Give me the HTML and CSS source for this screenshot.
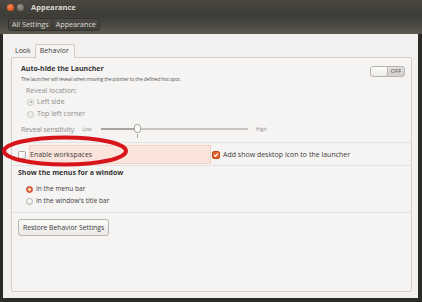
FILE: index.html
```html
<html><head>
<meta charset="UTF-8">
<meta name="viewport" content="width=device-width, initial-scale=1.0">
<title>Appearance</title>
<link rel="stylesheet" href="styles.css">
</head>
<body>
  <div class="window">
    <header class="titlebar">
      <div class="title-row">
        <span class="win-btn close"></span>
        <span class="win-btn minimize"></span>
        <span class="title">Appearance</span>
      </div>
      <div class="toolbar">
        <div class="crumbs">
          <span class="crumb">All Settings</span>
          <span class="crumb">Appearance</span>
        </div>
      </div>
    </header>

    <div class="content">
      <div class="tabs">
        <span class="tab">Look</span>
        <span class="tab active">Behavior</span>
      </div>

      <div class="panel">
        <section class="group launcher">
          <div class="group-head">
            <div>
              <div class="heading">Auto-hide the Launcher</div>
              <div class="desc">The launcher will reveal when moving the pointer to the defined hot spot.</div>
            </div>
            <div class="switch">
              <span class="switch-knob"></span>
              <span class="switch-label">OFF</span>
            </div>
          </div>
          <div class="sub-label">Reveal location:</div>
          <div class="radio disabled checked"><span class="radio-mark"></span>Left side</div>
          <div class="radio disabled"><span class="radio-mark"></span>Top left corner</div>
          <div class="sensitivity">
            <span class="sens-label">Reveal sensitivity</span>
            <span class="sens-end">Low</span>
            <div class="slider">
              <div class="slider-fill"></div>
              <span class="slider-thumb"></span>
            </div>
            <span class="sens-end high">High</span>
          </div>
        </section>

        <section class="group options">
          <div class="check">
            <span class="check-mark"></span>
            <span class="check-text highlight">Enable workspaces</span>
          </div>
          <div class="check checked">
            <span class="check-mark">
              <svg width="8" height="8" viewBox="0 0 8 8"><path d="M1.6 4.2 L3.3 5.8 L6.4 2.2" fill="none" stroke="#fff" stroke-width="1.4" stroke-linecap="round" stroke-linejoin="round"/></svg>
            </span>
            <span class="check-text">Add show desktop icon to the launcher</span>
          </div>
        </section>

        <section class="group menus">
          <div class="heading">Show the menus for a window</div>
          <div class="radio checked accent"><span class="radio-mark"></span>In the menu bar</div>
          <div class="radio"><span class="radio-mark"></span>In the window's title bar</div>
        </section>

        <section class="group restore">
          <button class="button">Restore Behavior Settings</button>
        </section>
      </div>
    </div>

    <svg class="annotation" width="130" height="34" viewBox="0 0 130 34">
      <ellipse cx="64" cy="16" rx="61" ry="13.5" fill="none" stroke="#d8141b" stroke-width="4"/>
    </svg>
  </div>
</body></html>
```

FILE: styles.css
```css
:root {
  --ubuntu-orange: #dd4814;
  --text-color: #3c3c3c;
  --muted-color: #8e8e8c;
  --window-bg: #f2f1f0;
  --line-color: #e4e2e0;
}

body {
  margin: 0;
  padding: 0;
  background: #2c2a26;
  font-family: 'Open Sans', 'DejaVu Sans', sans-serif;
  color: var(--text-color);
  overflow: hidden;
}

.window {
  position: relative;
  width: 422px;
  height: 302px;
  display: flex;
  flex-direction: column;
}

/* title bar + toolbar */
.titlebar {
  height: 34px;
  background: linear-gradient(to bottom, #4a4841 0%, #3e3c37 45%, #4a4842 75%, #5c5950 100%);
  display: flex;
  flex-direction: column;
}

.title-row {
  height: 14px;
  display: flex;
  align-items: center;
  padding-left: 7px;
  gap: 2px;
}

.win-btn {
  width: 7px;
  height: 7px;
  border-radius: 50%;
  display: inline-block;
}

.win-btn.close {
  background: radial-gradient(circle at 40% 35%, #f58a5a, #e2541c 70%);
}

.win-btn.minimize {
  background: radial-gradient(circle at 40% 35%, #9b9890, #6d6a63 70%);
  margin-left: 1px;
}

.title {
  color: #dfdbd2;
  font-size: 7.5px;
  font-weight: 700;
  margin-left: 5px;
}

.toolbar {
  height: 20px;
  padding: 4px 0 0 8px;
  box-sizing: border-box;
}

.crumbs {
  display: inline-flex;
  height: 13px;
  border: 1px solid #35332f;
  border-radius: 3px;
  background: linear-gradient(to bottom, #4c4a44, #403e39);
  box-sizing: border-box;
}

.crumb {
  color: #dfdbd2;
  font-size: 7.2px;
  line-height: 11px;
  padding: 0 3px 0 3px;
}

.crumb + .crumb {
  border-left: 1px solid #3a3834;
}

/* main area */
.content {
  flex: 1;
  background: var(--window-bg);
  margin: 0 4px 4px 3px;
  padding: 9px 6px 6px 8px;
  display: flex;
  flex-direction: column;
}

.tabs {
  display: flex;
  align-items: flex-end;
  height: 14px;
  padding-left: 3px;
}

.tab {
  font-size: 7px;
  line-height: 12px;
  padding: 0 4px 0 1px;
  color: var(--text-color);
}

.tab.active {
  border: 1px solid #cfccc8;
  border-bottom: none;
  border-radius: 2px 2px 0 0;
  background: #f5f4f3;
  padding: 0 5px 1px 4px;
  margin-bottom: -1px;
  position: relative;
}

.panel {
  flex: 1;
  border: 1px solid #d3d0cc;
  border-radius: 0 2px 2px 2px;
  background: #f5f4f3;
  display: flex;
  flex-direction: column;
}

.group {
  border-bottom: 1px solid var(--line-color);
}

.group.restore {
  border-bottom: none;
  padding: 6px 0 0 6px;
}

.launcher {
  padding: 6px 6px 7px 9px;
}

.group-head {
  display: flex;
  justify-content: space-between;
  align-items: flex-start;
}

.heading {
  font-size: 7px;
  font-weight: 700;
  line-height: 10px;
  color: #333;
}

.desc {
  font-size: 5px;
  letter-spacing: -0.15px;
  line-height: 10px;
  color: #555;
}

.switch {
  display: flex;
  width: 35px;
  height: 11px;
  border: 1px solid #b8b5b1;
  border-radius: 3px;
  box-sizing: border-box;
  background: linear-gradient(to bottom, #e2e0dd, #d3d0cc);
  margin-top: 2px;
  overflow: hidden;
}

.switch-knob {
  width: 16px;
  background: linear-gradient(to bottom, #fdfdfc, #ecebe9);
  border-right: 1px solid #b8b5b1;
  border-radius: 2px;
}

.switch-label {
  flex: 1;
  font-size: 6px;
  line-height: 9px;
  text-align: center;
  color: #555;
}

.sub-label {
  font-size: 7px;
  line-height: 10px;
  color: var(--muted-color);
  margin: 2px 0 0 5px;
}

.radio {
  display: flex;
  align-items: center;
  font-size: 7px;
  line-height: 12px;
  height: 12px;
  gap: 3px;
}

.launcher .radio {
  padding-left: 6px;
}

.radio.disabled {
  color: var(--muted-color);
}

.radio-mark {
  width: 7px;
  height: 7px;
  border-radius: 50%;
  border: 1px solid #b1aeaa;
  background: linear-gradient(to bottom, #fff, #eeedeb);
  box-sizing: border-box;
  position: relative;
}

.radio.disabled .radio-mark {
  border-color: #cdcac6;
  background: #efeeec;
}

.radio.disabled.checked .radio-mark::after {
  content: '';
  position: absolute;
  left: 1.5px;
  top: 1.5px;
  width: 2px;
  height: 2px;
  border-radius: 50%;
  background: #a9a6a2;
}

.radio.accent .radio-mark {
  border-color: #c44a1c;
  background: radial-gradient(circle, #f7d7c8 0 1.2px, #e0622e 1.8px);
}

.sensitivity {
  display: flex;
  align-items: center;
  height: 12px;
  margin-top: 3px;
  color: var(--muted-color);
}

.sens-label {
  font-size: 7.2px;
  letter-spacing: -0.2px;
}

.sens-end {
  font-size: 5px;
  margin-left: 8px;
}

.sens-end.high {
  margin-left: 8px;
}

.slider {
  position: relative;
  flex: 0 0 147px;
  height: 2px;
  margin-left: 9px;
  background: #c9c6c2;
  border-radius: 1px;
}

.slider-fill {
  width: 36px;
  height: 2px;
  background: #a9a6a2;
}

.slider-thumb {
  position: absolute;
  left: 33px;
  top: -4px;
  width: 7px;
  height: 9px;
  border: 1px solid #a9a6a2;
  border-radius: 3px;
  background: #fbfbfa;
  box-sizing: border-box;
}

.slider-thumb::after {
  content: '';
  position: absolute;
  left: 2px;
  top: 9px;
  width: 1px;
  height: 4px;
  background: #a9a6a2;
}

/* checkboxes row */
.options {
  display: grid;
  grid-template-columns: 194px 1fr;
  height: 21px;
  align-items: center;
  padding-left: 6px;
  margin-top: 1px;
}

.check {
  display: flex;
  align-items: center;
  font-size: 7px;
  gap: 3px;
}

.check-mark {
  width: 8px;
  height: 8px;
  border: 1px solid #b1aeaa;
  border-radius: 2px;
  box-sizing: border-box;
  background: linear-gradient(to bottom, #fff, #eeedeb);
  display: flex;
  align-items: center;
  justify-content: center;
}

.check.checked .check-mark {
  border-color: #c24618;
  background: #e0622e;
}

.check-mark svg {
  display: block;
}

.check-text.highlight {
  background: #fbe4dc;
  border: 1px solid #f6d2c5;
  width: 182px;
  line-height: 17px;
  box-sizing: border-box;
}

.menus {
  padding: 2px 6px 5px 6px;
}

.menus .radio {
  padding-left: 8px;
  font-size: 6.6px;
}

.menus .heading {
  margin-bottom: 5px;
}

.button {
  font-family: 'Open Sans', 'DejaVu Sans', sans-serif;
  font-size: 6.8px;
  color: var(--text-color);
  height: 17px;
  padding: 0 4px;
  border: 1px solid #b8b5b1;
  border-radius: 3px;
  background: linear-gradient(to bottom, #fbfbfa, #ebeae8);
}

/* red hand-drawn marker over the workspaces option */
.annotation {
  position: absolute;
  left: 1px;
  top: 135px;
}
```
